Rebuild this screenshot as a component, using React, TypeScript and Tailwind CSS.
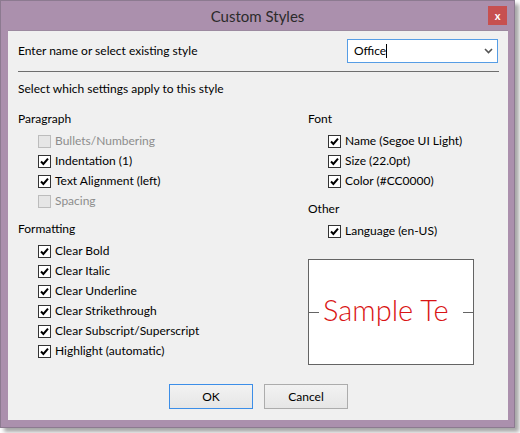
import React from "react";

const font = { fontFamily: "Lato, 'Noto Sans', sans-serif" };

function Check({ label, checked = false, disabled = false }: { label: string; checked?: boolean; disabled?: boolean }) {
  return (
    <div className="flex items-center h-[20px] pl-[20px]">
      <span
        className={
          "w-[13px] h-[13px] border flex items-center justify-center " +
          (disabled ? "border-[#bcbcbc] bg-[#e6e6e6]" : "border-[#333333] bg-white")
        }
      >
        {checked && (
          <svg width="11" height="11" viewBox="0 0 11 11">
            <path d="M2 5.5 L4.4 8 L9 2.6" fill="none" stroke="#000" strokeWidth="2" />
          </svg>
        )}
      </span>
      <span className={"ml-[4px] text-[12px] leading-[20px] " + (disabled ? "text-[#8d8d8d]" : "text-black")}>{label}</span>
    </div>
  );
}

function Heading({ children, className = "" }: { children: React.ReactNode; className?: string }) {
  return <div className={"h-[20px] leading-[20px] text-[12px] text-black " + className}>{children}</div>;
}

export default function App() {
  return (
    <div className="w-[520px] h-[433px] bg-white" style={font}>
      <div className="w-[515px] h-[428px] bg-[#ab90ad] border border-[#8c7a90] shadow-[4px_4px_4px_rgba(0,0,0,0.35)] flex flex-col">
        <div className="h-[29px] flex items-center relative">
          <div className="flex-1 text-center text-[15px] text-[#2b2b2b] pt-[1px]">Custom Styles</div>
          <div className="absolute right-[7px] top-[5px] w-[19px] h-[19px] bg-[#c75050] flex items-center justify-center text-white text-[11px] font-bold leading-none">
            x
          </div>
        </div>
        <div className="ml-[7px] mr-[6px] h-[390px] bg-[#f0f0f0] border-t border-[#9c8aa0] flex flex-col">
          <div className="flex items-center justify-between pl-[10px] pr-[10px] pt-[8px]">
            <span className="text-[12px] text-black">Enter name or select existing style</span>
            <div className="w-[151px] h-[24px] border border-[#569de5] bg-white flex items-center pl-[6px] pr-[4px]">
              <span className="text-[12px] text-black">Office</span>
              <span className="w-[1px] h-[14px] bg-black"></span>
              <svg className="ml-auto" width="9" height="6" viewBox="0 0 9 6">
                <path d="M1 1 L4.5 4.5 L8 1" fill="none" stroke="#555" strokeWidth="1.6" />
              </svg>
            </div>
          </div>
          <div className="ml-[10px] mr-[9px] mt-[8px] h-[1px] bg-[#6e6e6e]"></div>
          <Heading className="ml-[10px] mt-[7px]">Select which settings apply to this style</Heading>
          <div className="flex mt-[10px] pl-[10px]">
            <div className="w-[290px] flex flex-col">
              <Heading>Paragraph</Heading>
              <div className="mt-[2px]">
                <Check label="Bullets/Numbering" disabled />
                <Check label="Indentation (1)" checked />
                <Check label="Text Alignment (left)" checked />
                <Check label="Spacing" disabled />
              </div>
              <Heading className="mt-[8px]">Formatting</Heading>
              <div className="mt-[2px]">
                <Check label="Clear Bold" checked />
                <Check label="Clear Italic" checked />
                <Check label="Clear Underline" checked />
                <Check label="Clear Strikethrough" checked />
                <Check label="Clear Subscript/Superscript" checked />
                <Check label="Highlight (automatic)" checked />
              </div>
            </div>
            <div className="flex flex-col">
              <Heading>Font</Heading>
              <div className="mt-[2px]">
                <Check label="Name (Segoe UI Light)" checked />
                <Check label="Size (22.0pt)" checked />
                <Check label="Color (#CC0000)" checked />
              </div>
              <Heading className="mt-[8px]">Other</Heading>
              <div className="mt-[2px]">
                <Check label="Language (en-US)" checked />
              </div>
              <div className="mt-[18px] w-[166px] h-[106px] border border-[#646464] bg-white flex items-center">
                <span className="w-[10px] h-[1px] bg-[#646464]"></span>
                <span className="flex-1 pl-[4px] text-[29px] font-light text-[#d91414] leading-none pb-[5px]">Sample Te</span>
                <span className="w-[10px] h-[1px] bg-[#646464]"></span>
              </div>
            </div>
          </div>
          <div className="flex gap-[11px] mt-auto mb-[11px] pl-[161px]">
            <button className="w-[84px] h-[25px] border border-[#3c8ee8] bg-gradient-to-b from-[#f2f2f2] to-[#e6e6e6] text-[12px] text-black">OK</button>
            <button className="w-[84px] h-[25px] border border-[#acacac] bg-gradient-to-b from-[#f2f2f2] to-[#e6e6e6] text-[12px] text-black">Cancel</button>
          </div>
        </div>
      </div>
    </div>
  );
}
